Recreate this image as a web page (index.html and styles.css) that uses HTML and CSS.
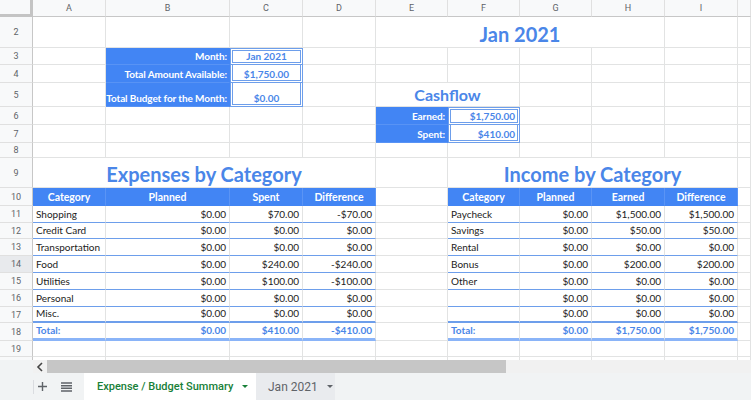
FILE: index.html
```html
<!DOCTYPE html>
<html lang="en">
<head>
  <meta charset="UTF-8" />
  <meta name="viewport" content="width=device-width, initial-scale=1.0" />
  <title>Expense / Budget Summary</title>
  <link rel="stylesheet" href="styles.css">
</head>
<body>
  <div class="sheet">
    <table class="grid">
      <colgroup>
        <col class="c-rh"><col class="c-a"><col class="c-b"><col class="c-c"><col class="c-d">
        <col class="c-e"><col class="c-f"><col class="c-g"><col class="c-h"><col class="c-i"><col class="c-j">
      </colgroup>
      <thead>
        <tr class="col-heads">
          <th class="corner"></th><th>A</th><th>B</th><th>C</th><th>D</th><th>E</th><th>F</th><th>G</th><th>H</th><th>I</th><th></th>
        </tr>
      </thead>
      <tbody>
        <tr class="h31">
          <th>2</th><td></td><td></td><td></td><td></td>
          <td colspan="4" class="title">Jan 2021</td><td></td><td></td>
        </tr>
        <tr class="h17">
          <th>3</th><td></td><td class="lbl">Month:</td><td class="box top">Jan 2021</td><td></td>
          <td></td><td></td><td></td><td></td><td></td><td></td>
        </tr>
        <tr class="h18">
          <th>4</th><td></td><td class="lbl">Total Amount Available:</td><td class="box">$1,750.00</td><td></td>
          <td></td><td></td><td></td><td></td><td></td><td></td>
        </tr>
        <tr class="h24">
          <th>5</th><td></td><td class="lbl">Total Budget for the Month:</td><td class="box">$0.00</td><td></td>
          <td colspan="2" class="subtitle">Cashflow</td><td></td><td></td><td></td><td></td>
        </tr>
        <tr class="h18">
          <th>6</th><td></td><td></td><td></td><td></td>
          <td class="lbl">Earned:</td><td class="box top num">$1,750.00</td><td></td><td></td><td></td><td></td>
        </tr>
        <tr class="h18">
          <th>7</th><td></td><td></td><td></td><td></td>
          <td class="lbl">Spent:</td><td class="box num">$410.00</td><td></td><td></td><td></td><td></td>
        </tr>
        <tr class="h15">
          <th>8</th><td></td><td></td><td></td><td></td><td></td><td></td><td></td><td></td><td></td><td></td>
        </tr>
        <tr class="h30">
          <th>9</th><td colspan="4" class="title">Expenses by Category</td><td></td>
          <td colspan="4" class="title">Income by Category</td><td></td>
        </tr>
        <tr class="h18">
          <th>10</th>
          <td class="hd">Category</td><td class="hd">Planned</td><td class="hd">Spent</td><td class="hd">Difference</td>
          <td></td>
          <td class="hd">Category</td><td class="hd">Planned</td><td class="hd">Earned</td><td class="hd">Difference</td>
          <td></td>
        </tr>
      </tbody>
      <tbody id="dataRows">
        <!-- Category rows inserted via JavaScript -->
      </tbody>
      <tbody>
        <tr class="h16">
          <th>19</th><td></td><td></td><td></td><td></td><td></td><td></td><td></td><td></td><td></td><td></td>
        </tr>
        <tr class="h17">
          <th></th><td></td><td></td><td></td><td></td><td></td><td></td><td></td><td></td><td></td><td></td>
        </tr>
      </tbody>
    </table>
  </div>

  <div class="hscroll">
    <div class="gutter"></div>
    <div class="arrow">
      <svg width="8" height="10" viewBox="0 0 8 10"><polyline points="6,1 2,5 6,9" fill="none" stroke="#444" stroke-width="1.6"/></svg>
    </div>
    <div class="thumb"></div>
    <div class="track"></div>
  </div>

  <div class="tabbar">
    <div class="tools">
      <span class="divider"></span>
      <svg class="add" width="9" height="9" viewBox="0 0 9 9"><path d="M4.5 0v9M0 4.5h9" stroke="#5f6368" stroke-width="1.4"/></svg>
      <svg class="list" width="11" height="10" viewBox="0 0 11 10"><path d="M0 1h11M0 3.7h11M0 6.3h11M0 9h11" stroke="#5f6368" stroke-width="1.4"/></svg>
    </div>
    <div class="tab active">Expense / Budget Summary <span class="caret"></span></div>
    <div class="tab">Jan 2021 <span class="caret"></span></div>
  </div>

  <script>
    const expenses = [
      ['Shopping', '$0.00', '$70.00', '-$70.00'],
      ['Credit Card', '$0.00', '$0.00', '$0.00'],
      ['Transportation', '$0.00', '$0.00', '$0.00'],
      ['Food', '$0.00', '$240.00', '-$240.00'],
      ['Utilities', '$0.00', '$100.00', '-$100.00'],
      ['Personal', '$0.00', '$0.00', '$0.00'],
      ['Misc.', '$0.00', '$0.00', '$0.00'],
      ['Total:', '$0.00', '$410.00', '-$410.00'],
    ];

    const income = [
      ['Paycheck', '$0.00', '$1,500.00', '$1,500.00'],
      ['Savings', '$0.00', '$50.00', '$50.00'],
      ['Rental', '$0.00', '$0.00', '$0.00'],
      ['Bonus', '$0.00', '$200.00', '$200.00'],
      ['Other', '$0.00', '$0.00', '$0.00'],
      ['', '$0.00', '$0.00', '$0.00'],
      ['', '$0.00', '$0.00', '$0.00'],
      ['Total:', '$0.00', '$1,750.00', '$1,750.00'],
    ];

    const heights = [17, 16, 17, 17, 17, 17, 16, 18];

    function cells(row, cls) {
      return `<td class="${cls} cat">${row[0]}</td>` +
        row.slice(1).map(v => `<td class="${cls} num">${v}</td>`).join('');
    }

    document.getElementById('dataRows').innerHTML = expenses.map((row, i) => {
      let cls = 'line';
      if (i === expenses.length - 2) cls = 'line last';
      if (i === expenses.length - 1) cls = 'line total';
      return `
        <tr class="h${heights[i]}">
          <th class="${i === 3 ? 'sel' : ''}">${i + 11}</th>
          ${cells(row, cls)}
          <td></td>
          ${cells(income[i], cls)}
          <td></td>
        </tr>`;
    }).join('');
  </script>
</body>
</html>
```

FILE: styles.css
```css
:root {
  --fill-blue: #4285f4;
  --text-blue: #4a86e8;
  --line-blue: #6d9eeb;
  --grid-line: #e2e3e3;
}

* {
  box-sizing: border-box;
}

body {
  margin: 0;
  width: 751px;
  height: 400px;
  overflow: hidden;
  background: #fff;
  font-family: Lato, 'Open Sans', sans-serif;
}

.sheet {
  height: 360px;
  overflow: hidden;
}

.grid {
  width: 751px;
  table-layout: fixed;
  border-collapse: separate;
  border-spacing: 0;
}

.c-rh { width: 33px; }
.c-a { width: 73px; }
.c-b { width: 124px; }
.c-c { width: 73px; }
.c-d { width: 73px; }
.c-e { width: 72px; }
.c-f { width: 72px; }
.c-g { width: 72px; }
.c-h { width: 73px; }
.c-i { width: 73px; }
.c-j { width: 13px; }

/* row heights, like the sheet's own */
.col-heads { height: 17px; }
.h15 { height: 15px; }
.h16 { height: 16px; }
.h17 { height: 17px; }
.h18 { height: 18px; }
.h24 { height: 24px; }
.h30 { height: 30px; }
.h31 { height: 31px; }

.grid th {
  padding: 0;
  background: #f8f9fa;
  color: #5f6368;
  font: 400 9px Roboto, Arial, sans-serif;
  text-align: center;
  vertical-align: middle;
  border-right: 1px solid #c7c7c7;
  border-bottom: 1px solid #e0e0e0;
}

.col-heads th {
  border-right-color: #e0e0e0;
  border-bottom-color: #c7c7c7;
}

.grid th.corner {
  border-right: 3px solid #c4c4c4;
  border-bottom: 3px solid #c4c4c4;
}

.grid th.sel {
  background: #e8eaed;
}

.grid td {
  padding: 0 3px 2px;
  border-right: 1px solid var(--grid-line);
  border-bottom: 1px solid var(--grid-line);
  color: #222;
  font-size: 10px;
  line-height: 12px;
  vertical-align: bottom;
  white-space: nowrap;
  overflow: hidden;
}

.grid td.title {
  padding-bottom: 1px;
  color: var(--text-blue);
  font-size: 20px;
  font-weight: 700;
  line-height: 24px;
  text-align: center;
}

.grid td.subtitle {
  padding-bottom: 1px;
  color: var(--text-blue);
  font-size: 16px;
  font-weight: 700;
  line-height: 20px;
  text-align: center;
}

.grid td.lbl {
  background: var(--fill-blue);
  border-right-color: var(--fill-blue);
  border-bottom-color: #5893f5;
  padding: 0 2px 2px 0;
  color: #fff;
  font-weight: 700;
  letter-spacing: -0.1px;
  text-align: right;
}

.grid td.box {
  border: 3px double var(--line-blue);
  border-top: 0;
  padding: 0 2px 1px;
  color: var(--text-blue);
  font-weight: 700;
  line-height: 10px;
  text-align: center;
}

.grid td.box.top {
  border-top: 3px double var(--line-blue);
}

.grid td.box.num {
  text-align: right;
}

.grid td.hd {
  background: var(--fill-blue);
  border-right-color: #5a94f5;
  border-bottom-color: var(--fill-blue);
  padding: 0 2px;
  color: #fff;
  font-size: 10.5px;
  font-weight: 700;
  text-align: center;
  vertical-align: middle;
}

.grid td.num {
  text-align: right;
}

.grid td.line {
  border-bottom: 1px solid var(--line-blue);
}

.grid td.line.last {
  border-bottom: 2px solid var(--line-blue);
}

.grid td.line.total {
  border-bottom: 3px solid #8ab4f8;
  color: var(--text-blue);
  font-weight: 700;
}

.hscroll {
  display: flex;
  height: 13px;
  background: #f1f3f4;
}

.hscroll .gutter {
  width: 33px;
  background: #f1f3f4;
}

.hscroll .arrow {
  width: 14px;
  display: flex;
  align-items: center;
  justify-content: center;
  background: #f1f1f1;
}

.hscroll .thumb {
  width: 459px;
  background: #c6c6c6;
}

.hscroll .track {
  flex: 1;
  background: #f1f1f1;
}

.tabbar {
  display: flex;
  height: 27px;
  background: #f1f3f4;
  font-family: Roboto, Arial, sans-serif;
}

.tools {
  width: 84px;
  display: flex;
  align-items: center;
  padding-left: 33px;
}

.tools .divider {
  width: 1px;
  height: 14px;
  background: #dadce0;
}

.tools .add {
  margin-left: 4px;
}

.tools .list {
  margin-left: 14px;
}

.tab {
  display: flex;
  align-items: center;
  gap: 9px;
  width: 79px;
  padding-left: 12px;
  background: #e9ebee;
  color: #5f6368;
  font-size: 12px;
  white-space: nowrap;
}

.tab.active {
  width: 172px;
  padding-left: 13px;
  background: #fff;
  color: #188038;
  font-size: 11px;
  font-weight: 500;
}

.caret {
  width: 0;
  height: 0;
  border-left: 3px solid transparent;
  border-right: 3px solid transparent;
  border-top: 3.5px solid currentColor;
}
```
